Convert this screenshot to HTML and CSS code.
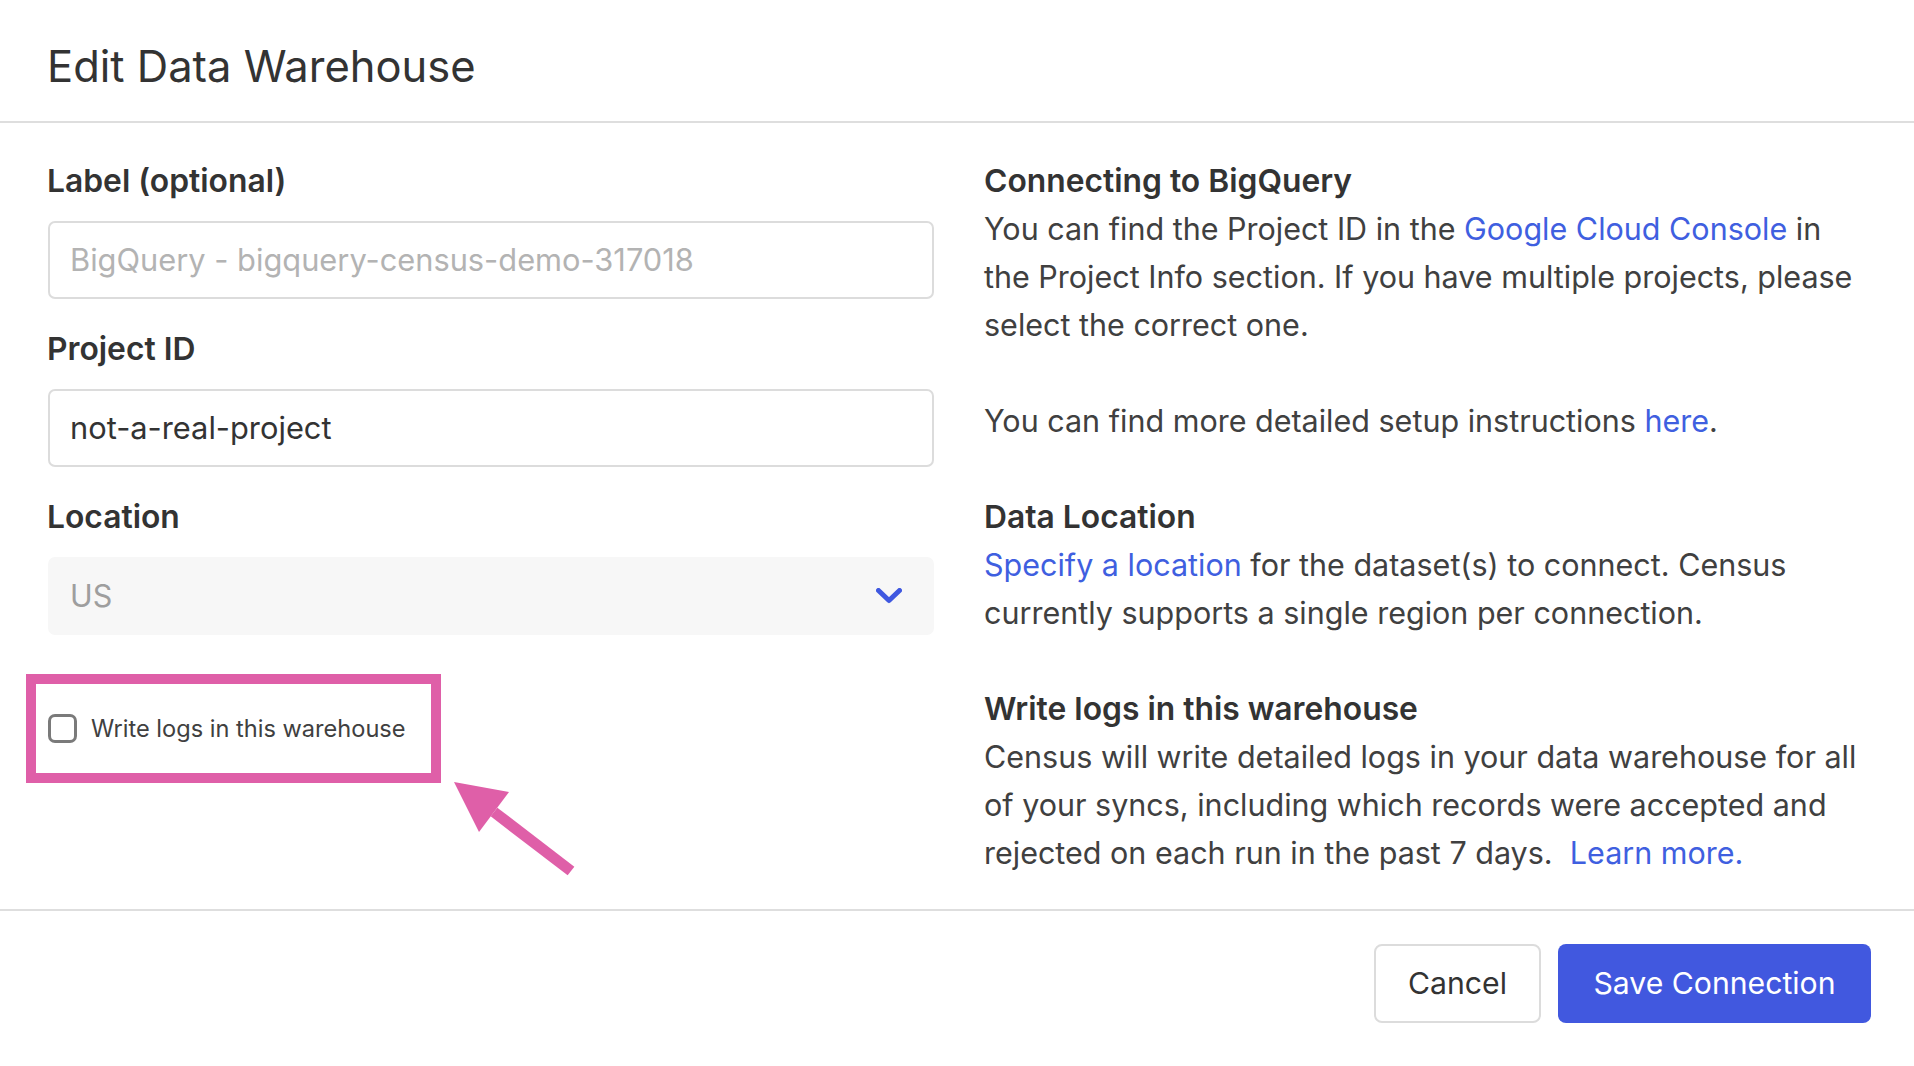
FILE: index.html
```html
<!DOCTYPE html>
<html lang="en">
<head>
<meta charset="utf-8">
<title>Edit Data Warehouse</title>
<link rel="stylesheet" href="styles.css">
</head>
<body>
<div class="modal">
  <header class="modal-header">
    <h1 class="modal-title">Edit Data Warehouse</h1>
  </header>
  <main class="modal-body">
    <section class="form-col">
      <div class="field">
        <label class="field-label" for="label">Label (optional)</label>
        <input class="text-input" id="label" type="text" placeholder="BigQuery - bigquery-census-demo-317018">
      </div>
      <div class="field">
        <label class="field-label" for="project">Project ID</label>
        <input class="text-input" id="project" type="text" value="not-a-real-project">
      </div>
      <div class="field">
        <label class="field-label">Location</label>
        <div class="select">
          <span class="select-value">US</span>
          <svg class="chevron" width="26" height="16" viewBox="0 0 26 16"><path d="M2.5 2.5 L13 12.5 L23.5 2.5" fill="none" stroke="#3f58e0" stroke-width="5" stroke-linecap="round" stroke-linejoin="round"/></svg>
        </div>
      </div>
      <div class="highlight">
        <label class="check-row">
          <span class="checkbox"></span>
          <span class="check-label">Write logs in this warehouse</span>
        </label>
      </div>
    </section>
    <section class="help-col">
      <h3 class="help-title">Connecting to BigQuery</h3>
      <p class="help-text">You can find the Project ID in the <a class="link" href="#">Google Cloud Console</a> in the Project Info section. If you have multiple projects, please select the correct one.</p>
      <p class="help-text">You can find more detailed setup instructions <a class="link" href="#">here</a>.</p>
      <h3 class="help-title">Data Location</h3>
      <p class="help-text"><a class="link" href="#">Specify a location</a> for the dataset(s) to connect. Census currently supports a single region per connection.</p>
      <h3 class="help-title">Write logs in this warehouse</h3>
      <p class="help-text">Census will write detailed logs in your data warehouse for all of your syncs, including which records were accepted and rejected on each run in the past 7 days.&nbsp; <a class="link" href="#">Learn more.</a></p>
    </section>
  </main>
  <footer class="modal-footer">
    <button class="btn btn-secondary" type="button">Cancel</button>
    <button class="btn btn-primary" type="button">Save Connection</button>
  </footer>
</div>
<svg class="annotation-arrow" width="1914" height="1066" viewBox="0 0 1914 1066">
  <line x1="494" y1="812" x2="571" y2="871" stroke="#df5fa8" stroke-width="11"/>
  <polygon points="454,782 509,792 479,832" fill="#df5fa8"/>
</svg>
</body>
</html>
```
FILE: styles.css
```css
* { box-sizing: border-box; }
html, body { margin: 0; padding: 0; background: #fff; }
body { font-family: Inter, "Noto Sans", sans-serif; color: #404040; }

.modal { width: 1914px; height: 1066px; display: flex; flex-direction: column; }

.modal-header { height: 123px; border-bottom: 2px solid #dedede; padding: 0 48px 0 47px; display: flex; align-items: center; }
.modal-title { margin: 0; font-size: 43.5px; font-weight: 400; color: #333; line-height: 1; padding-top: 12px; }

.modal-body { display: flex; gap: 50px; padding: 34px 48px 32px 48px; }
.form-col { width: 886px; flex: none; }
.help-col { width: 876px; flex: none; }

.field { margin-bottom: 26px; }
.field-label { display: block; font-size: 31.8px; font-weight: 600; line-height: 48px; color: #333; margin-bottom: 16px; margin-left: -1px; }
.text-input { display: block; width: 100%; height: 78px; border: 2px solid #dcdcdc; border-radius: 7px; padding: 0 20px; font: inherit; font-size: 30.8px; color: #333; background: #fff; outline: none; }
.text-input::placeholder { color: #b3b3b3; }

.select { height: 78px; border-radius: 7px; background: #f7f7f7; display: flex; align-items: center; justify-content: space-between; padding: 0 32px 0 22px; }
.select-value { font-size: 30.5px; color: #9e9e9e; }
.chevron { display: block; }

.highlight { margin: 39px 0 0 -22px; width: 415px; height: 109px; border: 10px solid #df5fa8; padding-left: 12px; display: flex; align-items: center; }
.check-row { display: flex; align-items: center; gap: 14px; }
.checkbox { width: 29px; height: 29px; border: 3px solid #7a7a7a; border-radius: 7px; flex: none; }
.check-label { font-size: 23.6px; color: #404040; white-space: nowrap; }

.help-title { margin: 0; font-size: 31.8px; font-weight: 600; line-height: 48px; color: #333; }
.help-text { margin: 0 0 48px 0; font-size: 30.5px; line-height: 48px; }
.help-text:last-child { margin-bottom: 0; }
.link { color: #3f5fe0; text-decoration: none; }

.modal-footer { border-top: 2px solid #dedede; display: flex; justify-content: flex-end; gap: 17px; padding: 33px 43px 0 0; margin-top: auto; height: 158px; }
.btn { height: 79px; border-radius: 8px; font-family: inherit; font-size: 30.2px; padding: 0; }
.btn-secondary { width: 167px; background: #fff; border: 2px solid #dcdcdc; color: #333; }
.btn-primary { width: 313px; background: #4158df; border: none; color: #fff; }

.annotation-arrow { position: absolute; left: 0; top: 0; pointer-events: none; }
```
